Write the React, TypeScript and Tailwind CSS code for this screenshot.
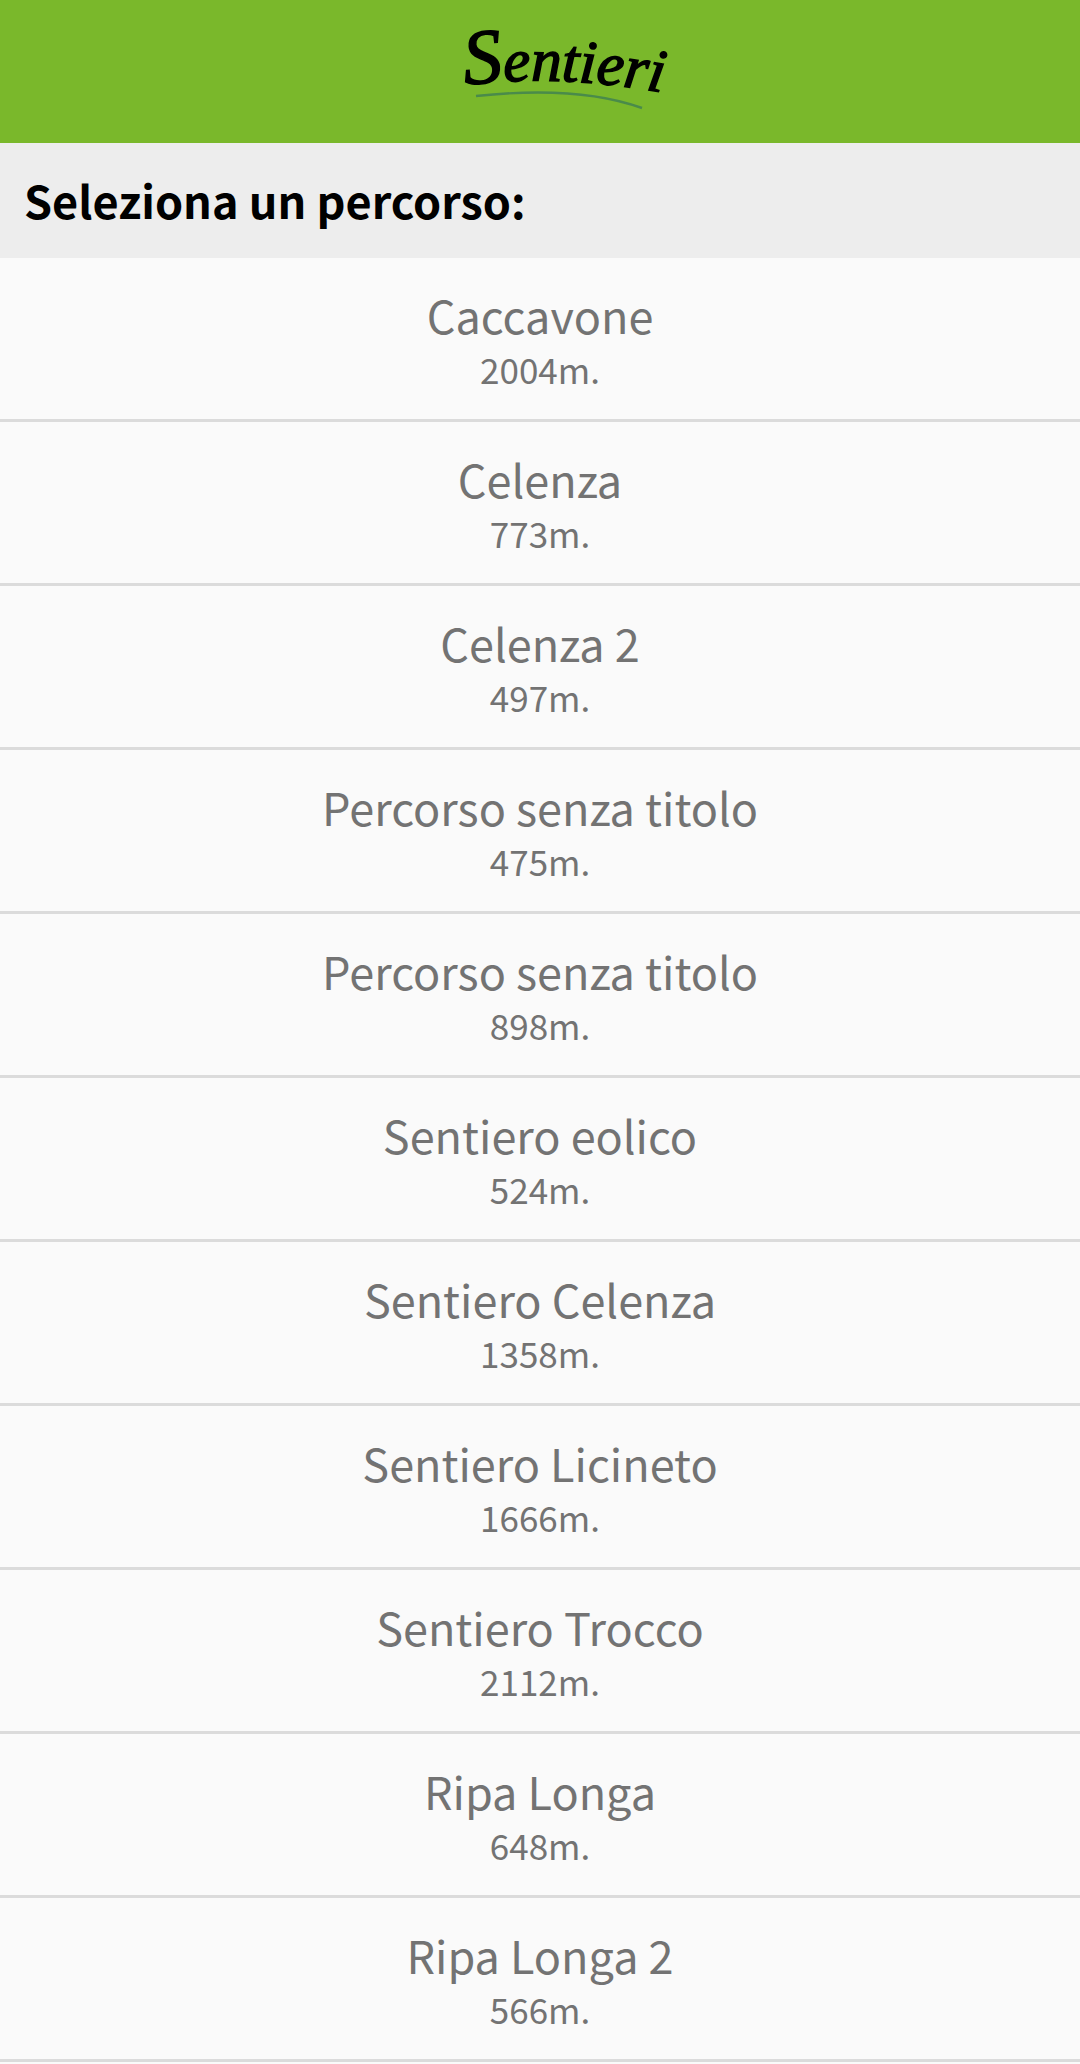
interface Trail {
  id: number
  name: string
  meters: number
}

const TRAILS: Trail[] = [
  { id: 1, name: 'Caccavone', meters: 2004 },
  { id: 2, name: 'Celenza', meters: 773 },
  { id: 3, name: 'Celenza 2', meters: 497 },
  { id: 4, name: 'Percorso senza titolo', meters: 475 },
  { id: 5, name: 'Percorso senza titolo', meters: 898 },
  { id: 6, name: 'Sentiero eolico', meters: 524 },
  { id: 7, name: 'Sentiero Celenza', meters: 1358 },
  { id: 8, name: 'Sentiero Licineto', meters: 1666 },
  { id: 9, name: 'Sentiero Trocco', meters: 2112 },
  { id: 10, name: 'Ripa Longa', meters: 648 },
  { id: 11, name: 'Ripa Longa 2', meters: 566 },
]

function Logo() {
  return (
    <svg
      width="208"
      height="112"
      viewBox="0 0 208 112"
      className="overflow-visible"
      role="img"
      aria-label="Sentieri"
    >
      <defs>
        <path id="logo-baseline" d="M5 65 Q110 52 230 78" />
      </defs>
      <text
        className="font-['Liberation_Serif',serif] italic"
        fill="#000"
        stroke="#000"
        strokeWidth="1.5"
        fontSize="61"
      >
        <textPath href="#logo-baseline">
          <tspan fontSize="78">S</tspan>entieri
        </textPath>
      </text>
      {/* Underline stroke */}
      <path d="M16 76 Q118 65 182 88" fill="none" stroke="#4a8b4a" strokeWidth="2.4" />
    </svg>
  )
}

function TrailRow({ trail }: { trail: Trail }) {
  return (
    <li className="border-b-3 border-[#dbdbdb]">
      <button type="button" className="block w-full px-6 pt-[27px] pb-[26px] text-center text-[#737373]">
        <span className="block text-[45px] leading-[60px]">{trail.name}</span>
        <span className="block text-[35px] leading-[48px]">{trail.meters}m.</span>
      </button>
    </li>
  )
}

export default function App() {
  return (
    <div className="min-h-screen bg-[#fafafa] font-['Noto_Sans_CJK_SC','Noto_Sans',sans-serif]">
      <header className="flex h-[143px] justify-center bg-[#7ab82b] pt-5 pl-12">
        <Logo />
      </header>

      <main>
        <h1 className="bg-[#ededed] px-6 pt-[27px] pb-[28px] text-[45px] leading-[60px] font-bold text-black">
          Seleziona un percorso:
        </h1>
        <ul>
          {TRAILS.map((trail) => (
            <TrailRow key={trail.id} trail={trail} />
          ))}
        </ul>
      </main>
    </div>
  )
}
